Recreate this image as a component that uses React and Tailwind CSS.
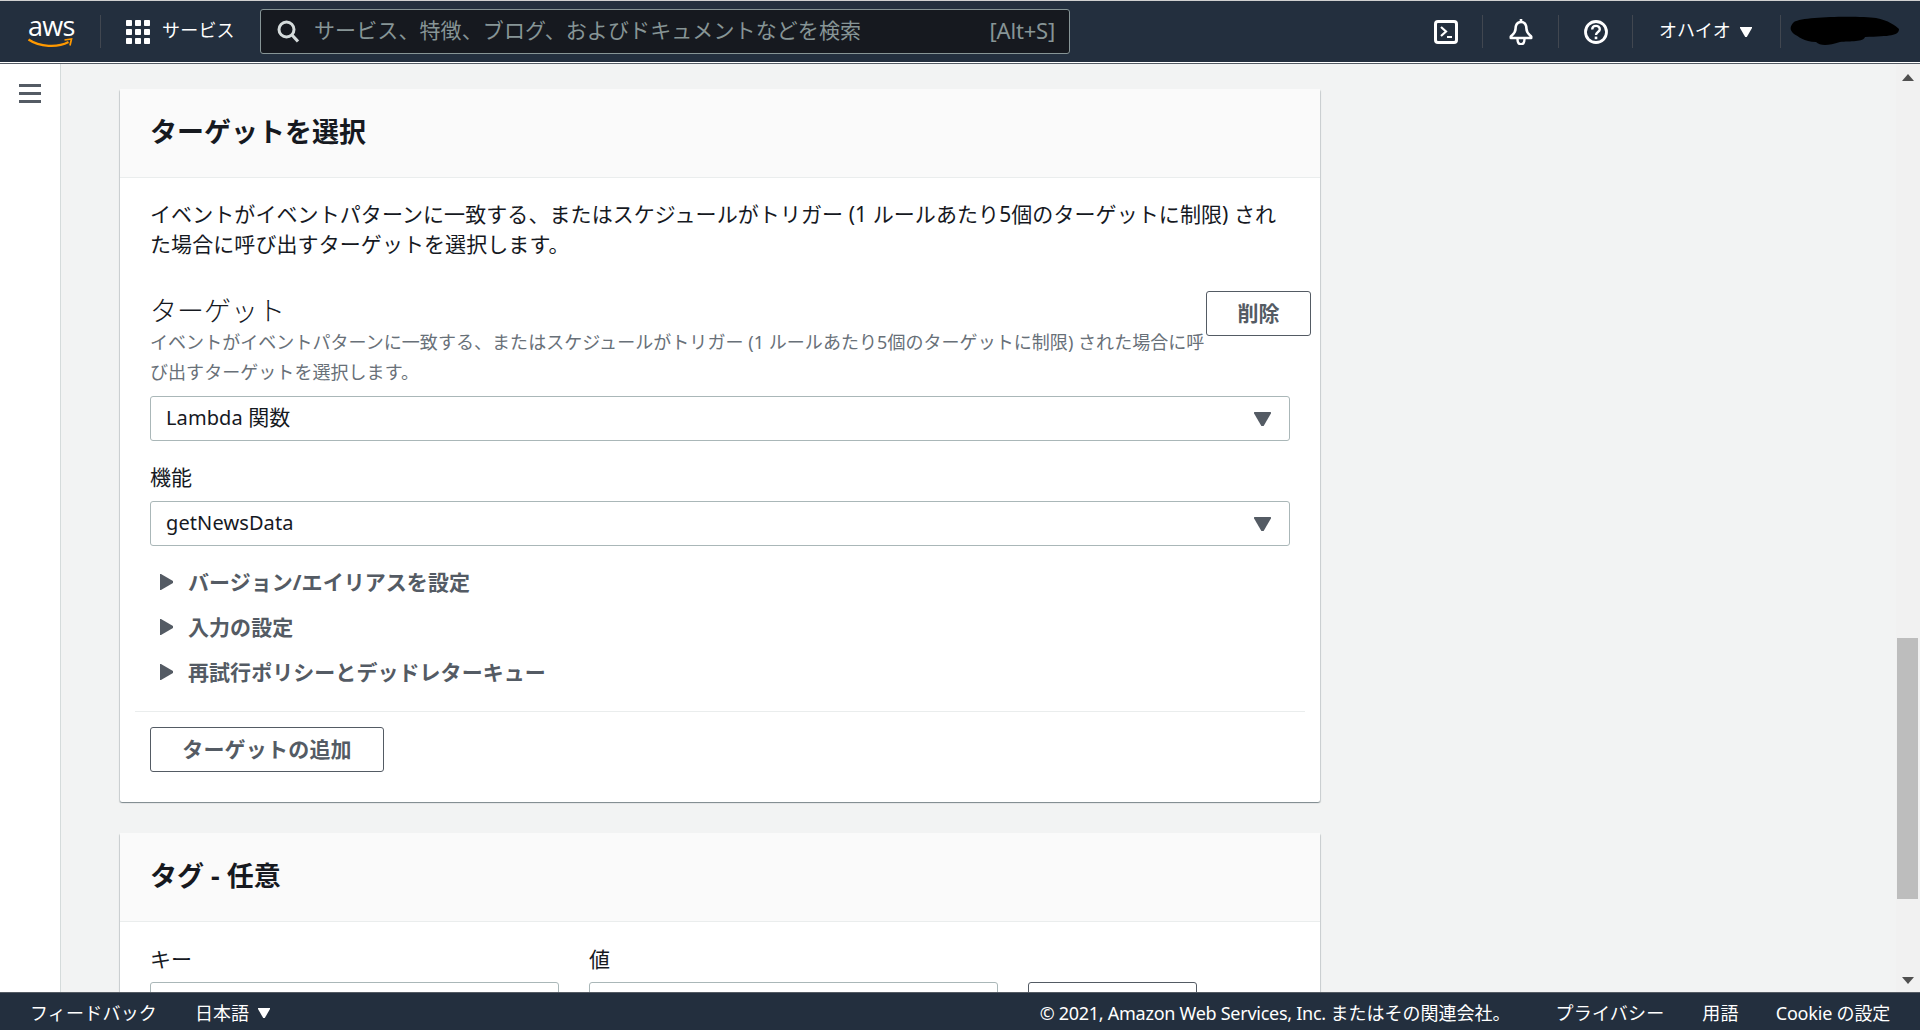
const FONT = "font-['Noto_Sans','Noto_Sans_CJK_JP',sans-serif]";

function Divider() {
  return <div className="w-px h-[33px] bg-[#414750]" />;
}

function Caret({ className }) {
  return (
    <svg viewBox="0 0 12 10" className={className} aria-hidden="true">
      <path d="M0 0 H12 V1 L6.8 10 H5.2 L0 1 Z" fill="currentColor" />
    </svg>
  );
}

function GridIcon() {
  return (
    <svg viewBox="0 0 24 24" className="w-6 h-6" aria-hidden="true">
      {[0, 9, 18].map((y) =>
        [0, 9, 18].map((x) => <rect key={`${x}-${y}`} x={x} y={y} width="6" height="6" rx="0.8" fill="#fff" />)
      )}
    </svg>
  );
}

function Nav() {
  return (
    <div className="h-[62px] shrink-0 border-t border-[#d0d0d0] bg-[#232f3e] flex items-center text-white">
      <div className="w-[100px] shrink-0 pl-[28px] flex flex-col items-start">
        <span className="text-[27px] leading-[22px] h-[22px] tracking-[-0.7px] font-['Open_Sans',sans-serif]">aws</span>
        <svg viewBox="0 0 46 10" className="w-[47px] h-[10px] mt-[1px] -ml-px" aria-hidden="true">
          <path d="M1 1.5 C12 9 30 10 41 4" stroke="#ff9900" strokeWidth="2.2" fill="none" />
          <path d="M37 2 L44 1 L42.5 7.5" stroke="#ff9900" strokeWidth="1.7" fill="none" />
        </svg>
      </div>
      <Divider />
      <div className="ml-[25px] shrink-0"><GridIcon /></div>
      <span className="ml-[12px] mb-[4px] w-[98px] shrink-0 text-[18px] tracking-[0.2px] leading-6">サービス</span>
      <div className="w-[810px] h-[45px] shrink-0 bg-[#16191f] border border-[#879596] rounded-[3px] flex items-center pl-[15px] pr-[14px]">
        <svg viewBox="0 0 24 24" className="w-[24px] h-[24px] mb-[2px] shrink-0" aria-hidden="true">
          <circle cx="10.5" cy="10.5" r="7.5" stroke="#d5dbdb" strokeWidth="3" fill="none" />
          <path d="M16 16 L22 22.5" stroke="#d5dbdb" strokeWidth="3.2" fill="none" />
        </svg>
        <span className="ml-[14px] mb-[4px] flex-1 text-[21px] tracking-[0.1px] leading-[30px] text-[#879596] whitespace-nowrap">サービス、特徴、ブログ、およびドキュメントなどを検索</span>
        <span className="mb-[3px] text-[22px] tracking-[-0.2px] leading-[30px] text-[#879596]">[Alt+S]</span>
      </div>
      <div className="ml-[364px] shrink-0">
        <svg viewBox="0 0 24 24" className="w-6 h-6" aria-hidden="true">
          <rect x="1.5" y="1.5" width="21" height="21" rx="2.5" stroke="#fff" strokeWidth="3" fill="none" />
          <path d="M7 7 L12 11.5 L7 16" stroke="#fff" strokeWidth="2.2" fill="none" />
          <path d="M13 17 H18" stroke="#fff" strokeWidth="2" fill="none" />
        </svg>
      </div>
      <div className="ml-[24px] mr-[26px]"><Divider /></div>
      <div className="shrink-0">
        <svg viewBox="0 0 24 26" className="w-6 h-[26px]" aria-hidden="true">
          <path d="M12 3 C7.5 3 6.5 7 6.5 10 C6.5 14 3.5 15.5 1.8 17.5 V19 H22.2 V17.5 C20.5 15.5 17.5 14 17.5 10 C17.5 7 16.5 3 12 3 Z" stroke="#fff" strokeWidth="2.6" fill="none" strokeLinejoin="round" />
          <path d="M12 0 V3" stroke="#fff" strokeWidth="2.6" />
          <path d="M8.5 20 C8.5 27 15.5 27 15.5 20" stroke="#fff" strokeWidth="2.4" fill="none" />
        </svg>
      </div>
      <div className="ml-[25px] mr-[25px]"><Divider /></div>
      <div className="shrink-0">
        <svg viewBox="0 0 24 24" className="w-6 h-6" aria-hidden="true">
          <circle cx="12" cy="12" r="10.5" stroke="#fff" strokeWidth="2.8" fill="none" />
          <path d="M8.2 9.4 C8.2 4.8 15.8 4.8 15.8 9.2 C15.8 12 12 12 12 15" stroke="#fff" strokeWidth="2.4" fill="none" />
          <rect x="10.7" y="16.6" width="2.6" height="2.6" fill="#fff" />
        </svg>
      </div>
      <div className="ml-[24px]"><Divider /></div>
      <span className="ml-[26px] mb-[4px] text-[18px] leading-6 w-[72px] shrink-0 whitespace-nowrap">オハイオ</span>
      <Caret className="ml-[9px] w-3 h-[10px] shrink-0 text-white" />
      <div className="ml-[28px]"><Divider /></div>
      <svg viewBox="0 0 110 32" className="ml-[9px] w-[110px] h-[32px] shrink-0" aria-hidden="true">
        <path d="M4 6 C14 0 70 0 86 2 C98 4 106 10 109 13 C109 20 100 20 75 21 C74 26 60 25 50 26 C38 30 30 30 26 26 C14 26 8 20 4 18 C-1 14 0 10 4 6 Z" fill="#000" />
      </svg>
    </div>
  );
}

function Select({ value }) {
  return (
    <div className="h-[45px] border border-[#aab7b8] rounded-[3px] bg-white flex items-center justify-between pl-[15px] pr-[18px]">
      <span className="mb-[2px] text-[21px] leading-[30px] text-[#16191f]">{value}</span>
      <Caret className="w-[17px] h-[14px] text-[#545b64]" />
    </div>
  );
}

function Expander({ children }) {
  return (
    <div className="h-[45px] flex items-center pl-[10px]">
      <svg viewBox="0 0 13 16" className="w-[13px] h-4 shrink-0" aria-hidden="true">
        <path d="M0 0 H1 L13 7 V9 L1 16 H0 Z" fill="#545b64" />
      </svg>
      <span className="ml-[15px] text-[21px] tracking-[0.05px] leading-[30px] font-bold text-[#545b64]">{children}</span>
    </div>
  );
}

const CARD = "w-[1200px] bg-white rounded-[2px] shadow-[0_1px_1px_0_rgba(0,28,36,0.3),1px_1px_1px_0_rgba(0,28,36,0.15),-1px_1px_1px_0_rgba(0,28,36,0.15)]";

function CardHeader({ children }) {
  return (
    <div className="h-[89px] bg-[#fafafa] border-b border-[#eaeded] px-[30px] pb-[3px] flex items-center">
      <h2 className="text-[27px] leading-[36px] font-bold text-[#16191f]">{children}</h2>
    </div>
  );
}

function TargetCard() {
  return (
    <section className={CARD}>
      <CardHeader>ターゲットを選択</CardHeader>
      <div className="px-[30px] pt-[21px] pb-[30px]">
        <p className="text-[21px] tracking-[0.08px] leading-[30px] text-[#16191f]">
          イベントがイベントパターンに一致する、またはスケジュールがトリガー (1 ルールあたり5個のターゲットに制限) された場合に呼び出すターゲットを選択します。
        </p>
        <div className="mt-[34px] flex items-start">
          <div className="w-[1056px] shrink-0">
            <h3 className="pt-px text-[27px] leading-[33px] font-light text-[#16191f]">ターゲット</h3>
            <p className="text-[18px] tracking-[0.05px] leading-[30px] text-[#687078]">
              イベントがイベントパターンに一致する、またはスケジュールがトリガー (1 ルールあたり5個のターゲットに制限) された場合に呼び出すターゲットを選択します。
            </p>
          </div>
          <button className="mt-[-2px] w-[105px] h-[45px] shrink-0 border border-[#545b64] rounded-[3px] bg-white text-[21px] font-bold text-[#545b64]">削除</button>
        </div>
        <div className="mt-[9px]"><Select value={<><span className="text-[20px] tracking-[0.1px]">Lambda</span> 関数</>} /></div>
        <label className="block mt-[21px] mb-[9px] text-[21px] leading-[30px] text-[#16191f]">機能</label>
        <Select value={<span className="text-[20px] tracking-[0.1px]">getNewsData</span>} />
        <div className="mt-[13px]">
          <Expander>バージョン/エイリアスを設定</Expander>
          <Expander>入力の設定</Expander>
          <Expander>再試行ポリシーとデッドレターキュー</Expander>
        </div>
        <div className="mt-[17px] -mx-[15px] border-t border-[#eaeded]" />
        <button className="mt-[15px] w-[234px] h-[45px] border border-[#545b64] rounded-[3px] bg-white text-[21px] tracking-[0.2px] font-bold text-[#545b64]">ターゲットの追加</button>
      </div>
    </section>
  );
}

function TagCard() {
  return (
    <section className={`${CARD} mt-[31px]`}>
      <CardHeader>タグ - 任意</CardHeader>
      <div className="px-[30px] pt-[22px] flex gap-[30px]">
        <div className="w-[409px]">
          <div className="text-[21px] leading-[30px] text-[#16191f]">キー</div>
          <div className="mt-[8px] h-[45px] border border-[#aab7b8] rounded-[3px]" />
        </div>
        <div className="w-[409px]">
          <div className="text-[21px] leading-[30px] text-[#16191f]">値</div>
          <div className="mt-[8px] h-[45px] border border-[#aab7b8] rounded-[3px]" />
        </div>
        <div className="w-[169px] pt-[38px]">
          <div className="h-[45px] border border-[#545b64] rounded-[3px]" />
        </div>
      </div>
    </section>
  );
}

function Scrollbar() {
  return (
    <div className="w-[24px] shrink-0 bg-[#f1f1f1] pl-px">
      <svg viewBox="0 0 12 7" className="block mt-[10px] ml-[5px] w-[12px] h-[7px]" aria-hidden="true">
        <path d="M6 0 L12 7 H0 Z" fill="#505050" />
      </svg>
      <div className="mt-[557px] w-[21px] h-[261px] bg-[#bdbdbd]" />
      <svg viewBox="0 0 12 7" className="block mt-[78px] ml-[5px] w-[12px] h-[7px]" aria-hidden="true">
        <path d="M0 0 H12 L6 7 Z" fill="#505050" />
      </svg>
    </div>
  );
}

function Footer() {
  return (
    <div className="h-[38px] shrink-0 bg-[#232f3e] border-t border-[#545b64] pt-[2px] flex items-center text-white text-[18px] leading-6 whitespace-nowrap">
      <span className="ml-[30px] tracking-[0.2px]">フィードバック</span>
      <span className="ml-[38px]">日本語</span>
      <Caret className="ml-[9px] w-3 h-[10px] shrink-0" />
      <span className="ml-auto"><span className="tracking-[-0.27px]">© 2021, Amazon Web Services, Inc.</span> またはその関連会社。</span>
      <span className="ml-[45px] tracking-[0.2px]">プライバシー</span>
      <span className="ml-[38px] tracking-[0.2px]">用語</span>
      <span className="ml-[37px] mr-[30px] tracking-[-0.2px]">Cookie の設定</span>
    </div>
  );
}

export default function App() {
  return (
    <div className={`h-screen w-full flex flex-col overflow-hidden bg-[#f2f3f3] ${FONT}`}>
      <Nav />
      <div className="h-px shrink-0 bg-white" />
      <div className="flex-1 min-h-0 flex overflow-hidden border-t border-[#545b64]">
        <aside className="w-[61px] shrink-0 bg-white border-r border-[#d5dbdb] pt-[20px] pl-[19px]">
          <svg viewBox="0 0 22 19" className="w-[22px] h-[19px]" aria-hidden="true">
            <path d="M0 1.5 H22 M0 9.5 H22 M0 17.5 H22" stroke="#545b64" strokeWidth="3" />
          </svg>
        </aside>
        <main className="flex-1 min-w-0 pl-[59px] pt-[25px] overflow-hidden">
          <TargetCard />
          <TagCard />
        </main>
        <Scrollbar />
      </div>
      <Footer />
    </div>
  );
}
